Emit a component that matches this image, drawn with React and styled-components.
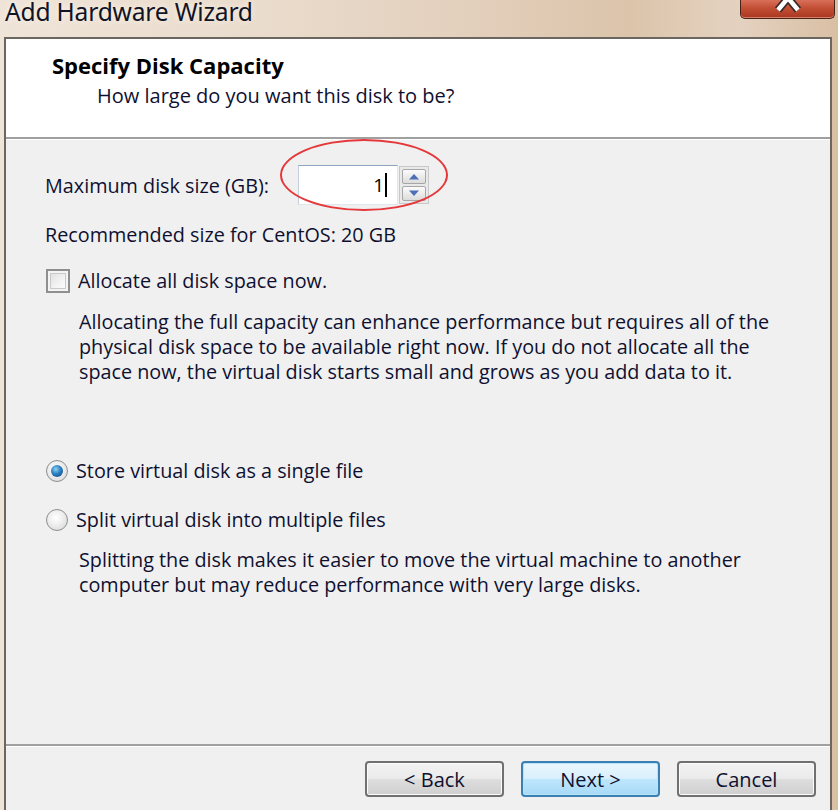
import React from "react";
import styled, { createGlobalStyle } from "styled-components";

const Global = createGlobalStyle`
  html, body { margin: 0; padding: 0; }
  body {
    background: #e6d5c3;
    font-family: "Open Sans", "Noto Sans", sans-serif;
    overflow: hidden;
  }
`;

const Screen = styled.div`
  width: 838px;
  height: 810px;
  overflow: hidden;
  display: flex;
  flex-direction: column;
  background: linear-gradient(90deg, #efe4d8 0%, #eadccd 30%, #e3d0bd 55%, #dcc4ab 75%, #e4d2c0 88%, #d9bfa4 100%);
`;

const TitleBar = styled.div`
  height: 37px;
  display: flex;
  justify-content: space-between;
  align-items: flex-start;
  flex-shrink: 0;
`;

const Title = styled.div`
  padding-left: 5px;
  margin-top: -1px;
  font-family: "Noto Sans", "Open Sans", sans-serif;
  font-size: 24.6px;
  line-height: 26px;
  color: #111326;
  text-shadow: 0 0 6px rgba(255, 250, 240, 0.9);
  letter-spacing: -0.2px;
`;

const CloseButton = styled.div`
  width: 93px;
  height: 18px;
  margin-right: 3px;
  border: 1px solid #4a2318;
  border-top: none;
  border-radius: 0 0 5px 5px;
  background: linear-gradient(180deg, #d8705a 0%, #c24e34 45%, #a9361f 100%);
  box-shadow: inset 0 -1px 0 rgba(255, 200, 180, 0.5);
  display: flex;
  justify-content: center;
  overflow: hidden;
`;

const Frame = styled.div`
  flex: 1;
  margin: 0 6px 0 4px;
  border: 2px solid #6b6660;
  border-bottom: none;
  display: flex;
  flex-direction: column;
  background: #f0f0f0;
`;

const Header = styled.div`
  height: 100px;
  flex-shrink: 0;
  background: #ffffff;
  border-bottom: 2px solid #a0a0a0;
  padding: 11px 0 0 46px;
  box-sizing: border-box;
`;

const Heading = styled.div`
  font-weight: 700;
  font-size: 22px;
  line-height: 30px;
  color: #000;
`;

const SubHeading = styled.div`
  margin-left: 45px;
  font-size: 20px;
  line-height: 32px;
  color: #0f1030;
`;

const Body = styled.div`
  height: 605px;
  flex-shrink: 0;
  box-sizing: border-box;
  border-top: 1px solid #ffffff;
  padding-left: 39px;
  display: flex;
  flex-direction: column;
  font-size: 19.8px;
  color: #0f1030;
`;

const SizeRow = styled.div`
  margin-top: 25px;
  height: 40px;
  display: flex;
  align-items: center;
  gap: 29px;
`;

const Line = styled.div`
  margin-top: ${(p) => p.$top || 0}px;
  line-height: 25px;
  white-space: nowrap;
`;

const OptionRow = styled.label`
  margin-top: ${(p) => p.$top || 0}px;
  height: 25px;
  display: flex;
  align-items: center;
  gap: ${(p) => p.$gap || 8}px;
  margin-left: 1px;
`;

const Note = styled.div`
  margin-top: ${(p) => p.$top || 0}px;
  margin-left: 34px;
  line-height: 25px;
  white-space: nowrap;
`;

const Spin = styled.div`
  position: relative;
  display: flex;
  align-items: center;
  gap: 1px;
`;

const SpinInput = styled.div`
  width: 100px;
  height: 40px;
  box-sizing: border-box;
  border: 1px solid #dfe6ee;
  border-top-color: #8ea3bd;
  border-left-color: #c3cfdc;
  background: #fff;
  display: flex;
  align-items: center;
  justify-content: flex-end;
  padding-right: 10px;
  font-size: 19px;
  color: #000;
`;

const Caret = styled.span`
  display: inline-block;
  width: 2px;
  height: 24px;
  background: #000;
  margin-left: 1px;
`;

const SpinButtons = styled.div`
  display: flex;
  flex-direction: column;
  gap: 2px;
  padding: 2px;
  border: 1px solid #c8c8c8;
  background: #e9e9e9;
`;

const SpinButton = styled.div`
  width: 24px;
  height: 15px;
  box-sizing: border-box;
  border: 1px solid #a7a7a7;
  border-radius: 2px;
  background: linear-gradient(180deg, #fbfbfb 0%, #ececec 50%, #dcdcdc 100%);
  display: flex;
  align-items: center;
  justify-content: center;
`;

const Highlight = styled.div`
  position: absolute;
  left: -18px;
  top: -26px;
  width: 168px;
  height: 72px;
  box-sizing: border-box;
  border: 2px solid #e5383b;
  border-radius: 50%;
  pointer-events: none;
`;

const CheckBox = styled.span`
  width: 24px;
  height: 24px;
  box-sizing: border-box;
  border: 2px solid #8e8f8f;
  background: linear-gradient(135deg, #dcdcdc 0%, #f4f4f4 60%, #ffffff 100%);
  box-shadow: inset 0 0 0 2px #f4f4f4, inset 0 0 0 3px #c9c9c9;
  flex-shrink: 0;
`;

const Radio = styled.span`
  width: 22px;
  height: 22px;
  box-sizing: border-box;
  border-radius: 50%;
  border: 1px solid #8e8f8f;
  background: radial-gradient(circle at 45% 40%, #ffffff 0%, #f0f0f0 40%, #d2d2d2 100%);
  display: flex;
  align-items: center;
  justify-content: center;
  flex-shrink: 0;

  &::after {
    content: "";
    display: ${(p) => (p.$checked ? "block" : "none")};
    width: 12px;
    height: 12px;
    border-radius: 50%;
    background: radial-gradient(circle at 40% 35%, #8fd2f5 0%, #2a7fc0 45%, #0c3f74 100%);
  }
`;

const Footer = styled.div`
  flex: 1;
  border-top: 2px solid #a0a0a0;
  box-shadow: inset 0 1px 0 #ffffff;
  display: flex;
  justify-content: flex-end;
  align-items: flex-start;
  gap: 17px;
  padding: 15px 14px 0 0;
`;

const Button = styled.div`
  width: 139px;
  height: 36px;
  box-sizing: border-box;
  border-radius: 4px;
  border: 2px solid ${(p) => (p.$primary ? "#3c7fb1" : "#707070")};
  background: ${(p) =>
    p.$primary
      ? "linear-gradient(180deg, #eaf6fd 0%, #d9f0fc 48%, #bee6fd 52%, #a7d9f5 100%)"
      : "linear-gradient(180deg, #f2f2f2 0%, #ebebeb 48%, #dddddd 52%, #cfcfcf 100%)"};
  box-shadow: inset 0 0 0 1px ${(p) => (p.$primary ? "#b8e3f9" : "#fbfbfb")};
  display: flex;
  align-items: center;
  justify-content: center;
  font-size: 20px;
  color: #0f1030;
`;

function Arrow({ up }) {
  return (
    <svg width="12" height="7" viewBox="0 0 12 7">
      <path d={up ? "M1 6.5 L6 1 L11 6.5 Z" : "M1 0.5 L6 6 L11 0.5 Z"} fill="#4d6fb5" />
    </svg>
  );
}

export default function App() {
  return (
    <>
      <Global />
      <Screen>
        <TitleBar>
          <Title>Add Hardware Wizard</Title>
          <CloseButton>
            <svg width="32" height="18" viewBox="0 0 32 18">
              <path d="M6 -14 L16 -2 L26 -14 M6 10 L16 -2 L26 10" stroke="#3a2a2a" strokeWidth="8" fill="none" />
              <path d="M6 -14 L16 -2 L26 -14 M6 10 L16 -2 L26 10" stroke="#ffffff" strokeWidth="4.5" fill="none" />
            </svg>
          </CloseButton>
        </TitleBar>
        <Frame>
          <Header>
            <Heading>Specify Disk Capacity</Heading>
            <SubHeading>How large do you want this disk to be?</SubHeading>
          </Header>
          <Body>
            <SizeRow>
              <span>Maximum disk size (GB):</span>
              <Spin>
                <SpinInput>
                  1<Caret />
                </SpinInput>
                <SpinButtons>
                  <SpinButton><Arrow up /></SpinButton>
                  <SpinButton><Arrow /></SpinButton>
                </SpinButtons>
                <Highlight />
              </Spin>
            </SizeRow>
            <Line $top={17}>Recommended size for CentOS: 20 GB</Line>
            <OptionRow $top={21}>
              <CheckBox />
              Allocate all disk space now.
            </OptionRow>
            <Note $top={16}>
              Allocating the full capacity can enhance performance but requires all of the
              <br />
              physical disk space to be available right now. If you do not allocate all the
              <br />
              space now, the virtual disk starts small and grows as you add data to it.
            </Note>
            <OptionRow $top={74} $gap={8}>
              <Radio $checked />
              Store virtual disk as a single file
            </OptionRow>
            <OptionRow $top={24} $gap={8}>
              <Radio />
              Split virtual disk into multiple files
            </OptionRow>
            <Note $top={15}>
              Splitting the disk makes it easier to move the virtual machine to another
              <br />
              computer but may reduce performance with very large disks.
            </Note>
          </Body>
          <Footer>
            <Button>&lt; Back</Button>
            <Button $primary>Next &gt;</Button>
            <Button>Cancel</Button>
          </Footer>
        </Frame>
      </Screen>
    </>
  );
}
